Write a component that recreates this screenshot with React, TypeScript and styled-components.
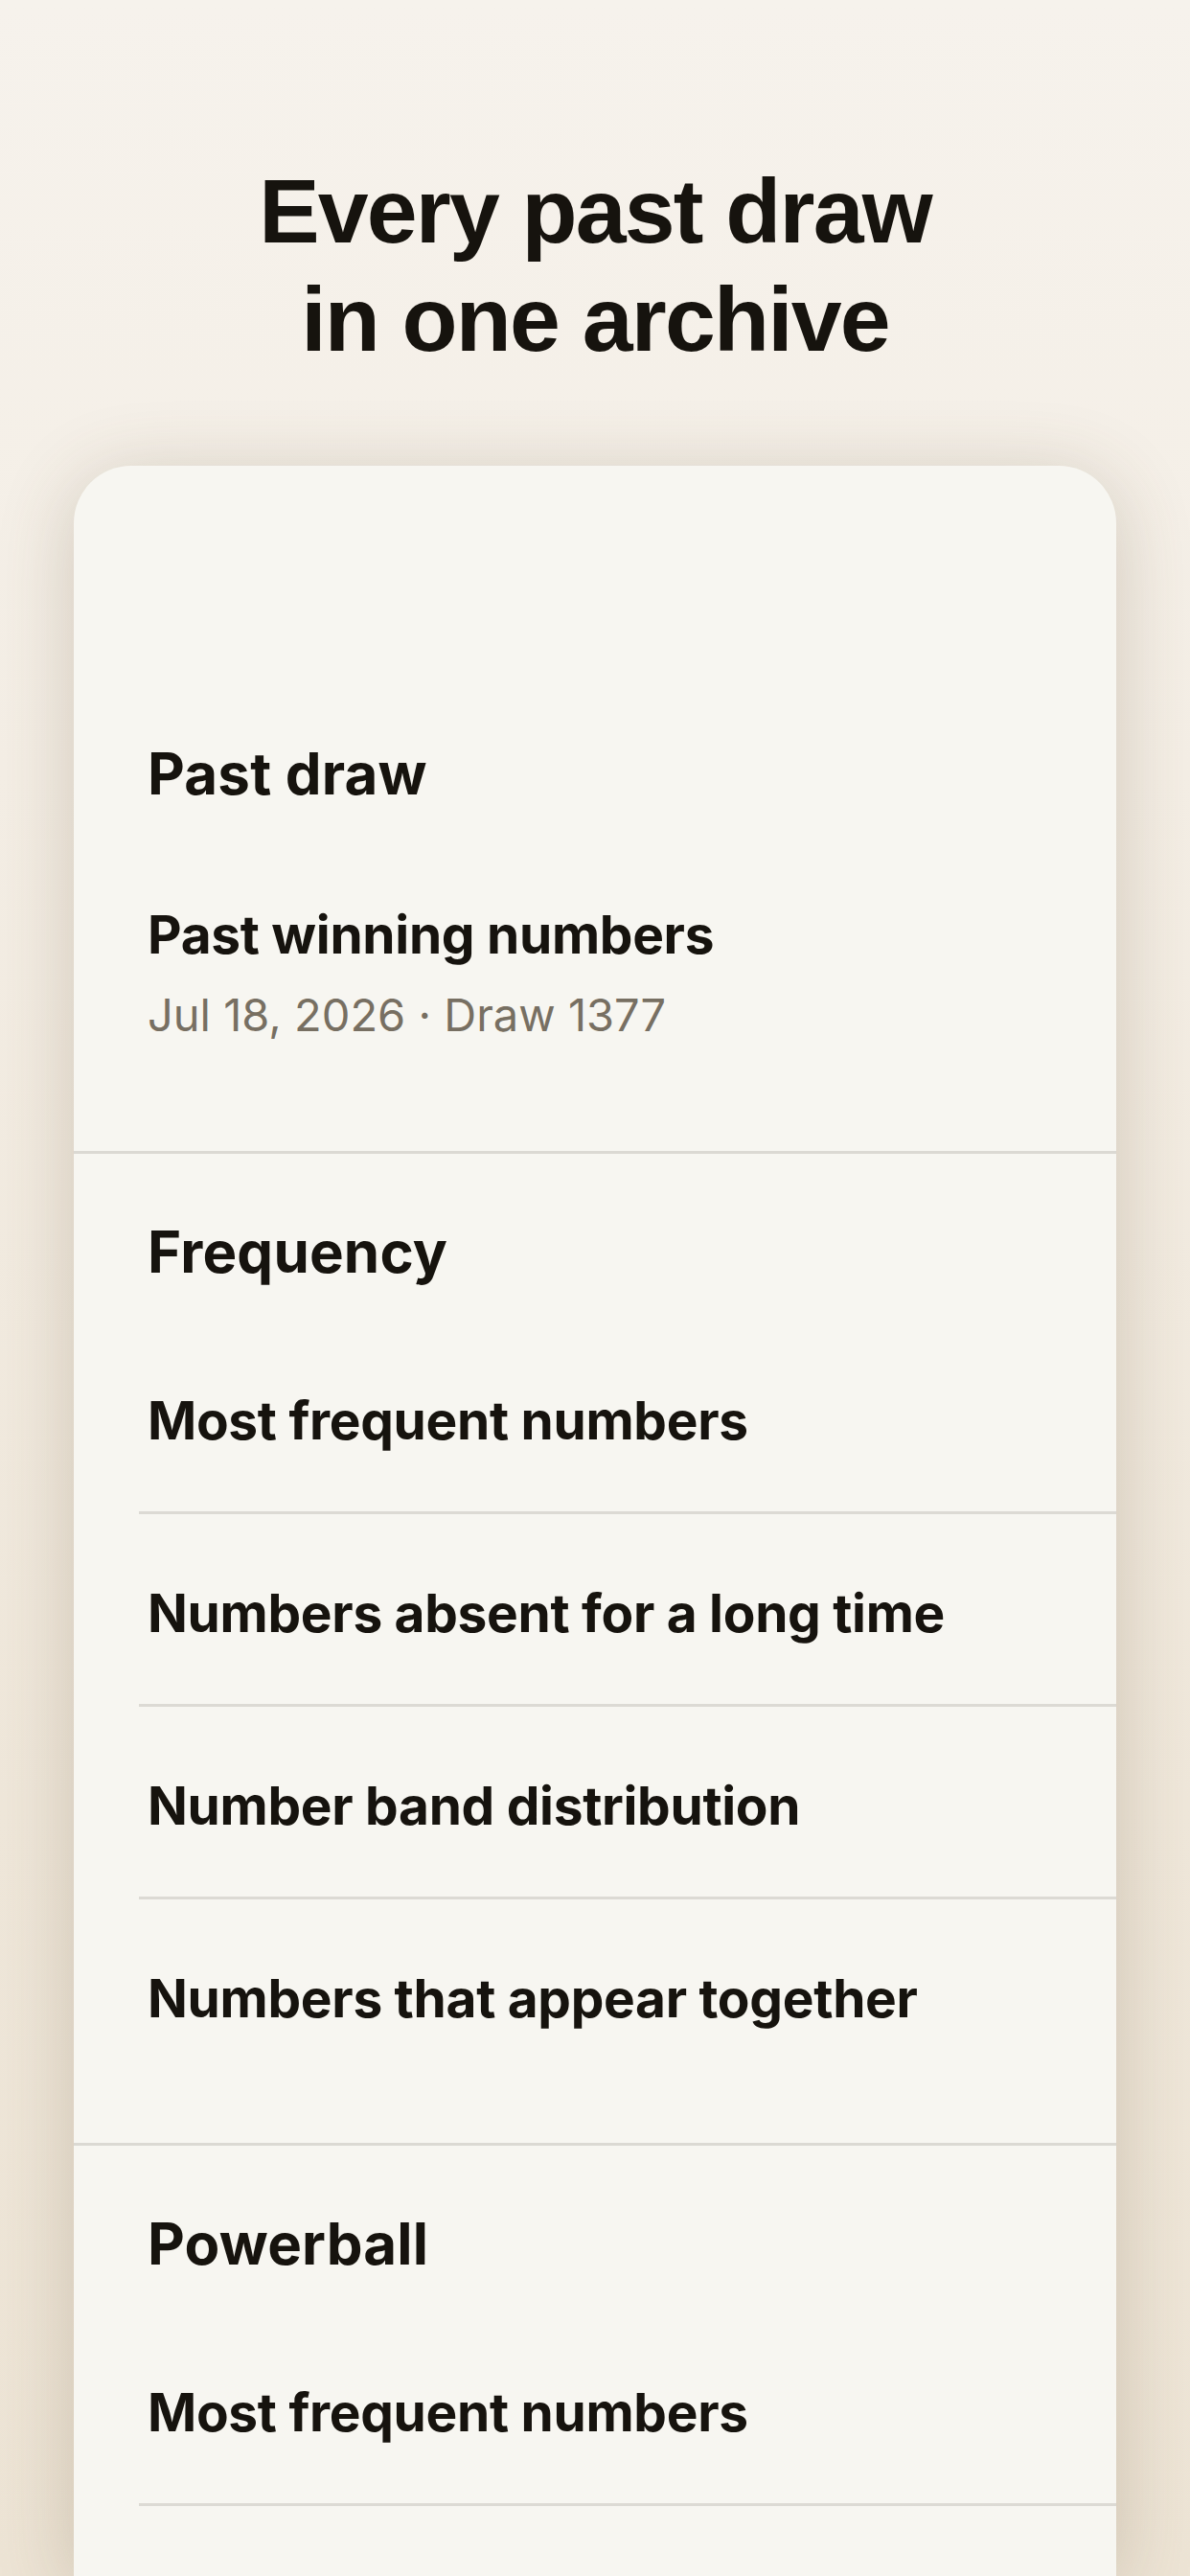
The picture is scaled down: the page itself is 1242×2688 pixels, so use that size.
import React from "react";
import styled, { createGlobalStyle } from "styled-components";

const GlobalStyle = createGlobalStyle`
  html, body {
    margin: 0;
    padding: 0;
  }
  body {
    background: #f5f0e8;
    font-family: Inter, "Noto Sans", sans-serif;
    -webkit-font-smoothing: antialiased;
  }
  * { box-sizing: border-box; }
`;

const Page = styled.div`
  height: 100vh;
  overflow: hidden;
  background: linear-gradient(180deg, #f6f2ec 0%, #f4eee5 30%, #efe7da 70%, #ede4d5 100%);
  padding-top: 164px;
  display: flex;
  flex-direction: column;
`;

const Title = styled.h1`
  margin: 0;
  text-align: center;
  font-family: "Liberation Sans", Arial, sans-serif;
  font-weight: 700;
  font-size: 95px;
  line-height: 113px;
  letter-spacing: -1.8px;
  color: #16130e;
`;

const Card = styled.div`
  margin: 96px 77px 0;
  background: #f7f6f1;
  border-radius: 60px 60px 0 0;
  padding-top: 219px;
  box-shadow: 0 12px 80px rgba(95, 75, 45, 0.24);
  flex: 1 0 auto;
`;

const Section = styled.section`
  padding-top: 67px;
  padding-bottom: 56px;
  & + & {
    border-top: 3px solid #dbd9d3;
  }
`;

const Heading = styled.h2`
  margin: 0 0 38px;
  padding-left: 77px;
  font-size: 60px;
  line-height: 70px;
  font-weight: 700;
  letter-spacing: 0.2px;
  color: #16130e;
`;

const List = styled.div`
  display: flex;
  flex-direction: column;
`;

const Row = styled.div<{ $hasSub?: boolean; $continues?: boolean }>`
  margin-left: 68px;
  padding: ${(p) => (p.$hasSub ? "62px 0 58px 9px" : "70px 0 62px 9px")};
  display: flex;
  flex-direction: column;
  border-bottom: ${(p) => (p.$continues ? "3px solid #dcdad4" : "0")};
  &:not(:last-child) {
    border-bottom: 3px solid #dcdad4;
  }
`;

const RowTitle = styled.div`
  font-size: 55px;
  line-height: 66px;
  font-weight: 700;
  letter-spacing: -0.3px;
  color: #16130e;
`;

const RowSub = styled.div`
  margin-top: 23px;
  font-size: 47px;
  line-height: 56px;
  font-weight: 400;
  color: #776f62;
`;

type Item = { title: string; sub?: string };
type Group = { heading: string; items: Item[]; continues?: boolean };

const groups: Group[] = [
  {
    heading: "Past draw",
    items: [{ title: "Past winning numbers", sub: "Jul 18, 2026 · Draw 1377" }],
  },
  {
    heading: "Frequency",
    items: [
      { title: "Most frequent numbers" },
      { title: "Numbers absent for a long time" },
      { title: "Number band distribution" },
      { title: "Numbers that appear together" },
    ],
  },
  {
    heading: "Powerball",
    items: [{ title: "Most frequent numbers" }],
    continues: true,
  },
];

export default function App() {
  return (
    <>
      <GlobalStyle />
      <Page>
        <Title>
          Every past draw
          <br />
          in one archive
        </Title>
        <Card>
          {groups.map((g) => (
            <Section key={g.heading}>
              <Heading>{g.heading}</Heading>
              <List>
                {g.items.map((it, i) => (
                  <Row
                    key={it.title}
                    $hasSub={!!it.sub}
                    $continues={!!g.continues && i === g.items.length - 1}
                  >
                    <RowTitle>{it.title}</RowTitle>
                    {it.sub && <RowSub>{it.sub}</RowSub>}
                  </Row>
                ))}
              </List>
            </Section>
          ))}
        </Card>
      </Page>
    </>
  );
}
